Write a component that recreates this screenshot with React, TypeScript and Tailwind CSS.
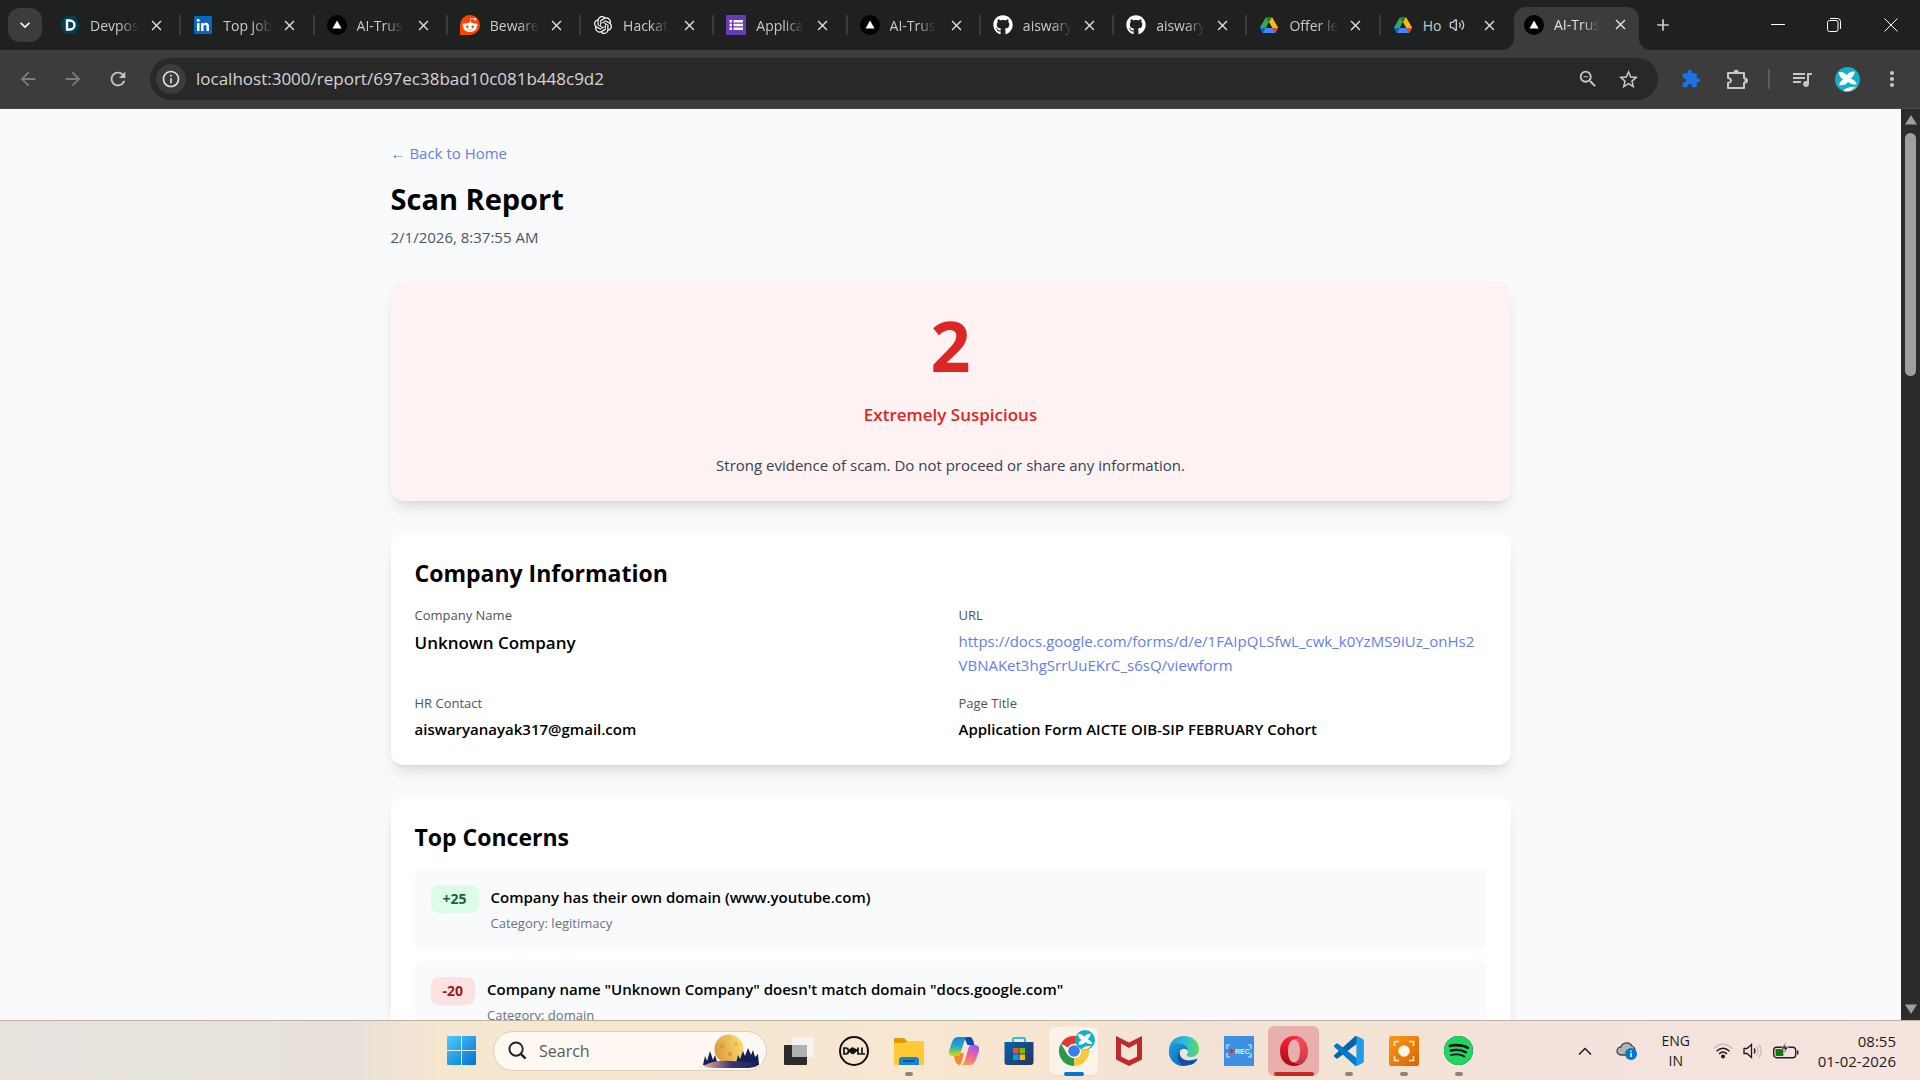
import { ReactNode } from "react";
import { Volume2 } from "lucide-react";
import { FaGithub, FaRedditAlien } from "react-icons/fa";
import { SiOpenai, SiSpotify } from "react-icons/si";
import {
    MdAdd,
    MdArrowBack,
    MdArrowForward,
    MdClose,
    MdExtension,
    MdInfoOutline,
    MdKeyboardArrowDown,
    MdMoreVert,
    MdQueueMusic,
    MdRefresh,
    MdStarBorder,
    MdZoomOut,
} from "react-icons/md";

const concerns = [
    { score: 25, title: "Company has their own domain (www.youtube.com)", category: "legitimacy" },
    { score: -20, title: 'Company name "Unknown Company" doesn\'t match domain "docs.google.com"', category: "domain" },
];

const DevpostIcon = () => (
    <svg viewBox="0 0 20 20" className="size-5">
        <path d="M5 1h10l5 9-5 9H5l-5-9z" fill="#003e54" />
        <path d="M7 5.5h3a4.5 4.5 0 0 1 0 9H7z" fill="none" stroke="#fff" strokeWidth="2.4" />
    </svg>
);

const LinkedInIcon = () => (
    <svg viewBox="0 0 18 18" className="size-[18px]">
        <rect width="18" height="18" rx="1" fill="#0a66c2" />
        <path d="M3 7h2.5v8H3zM7 7h2.4v1.1C9.9 7.3 10.7 6.8 11.8 6.8c2.5 0 3.2 1.6 3.2 3.9V15h-2.5v-4c0-1.1-.2-2-1.4-2-1.2 0-1.6.9-1.6 2v4H7z" fill="#fff" />
        <circle cx="4.2" cy="4.3" r="1.5" fill="#fff" />
    </svg>
);

const VercelIcon = () => (
    <svg viewBox="0 0 20 20" className="size-5 shrink-0">
        <circle cx="10" cy="10" r="10" fill="#000" />
        <path d="M10 5.5l4.5 8h-9z" fill="#fff" />
    </svg>
);

const RedditIcon = () => (
    <span className="flex size-5 items-center justify-center rounded-full rounded-bl-sm bg-[#ff4500]">
        <FaRedditAlien className="size-4 text-white" />
    </span>
);

const FormsIcon = () => (
    <svg viewBox="0 0 20 20" className="size-5">
        <rect width="20" height="20" rx="1" fill="#673ab7" />
        <path d="M7.500 5H17v2.500H7.500zM7.500 8.800H17v2.500H7.500zM7.500 12.600H17v2.500H7.500zM3.500 5H6v2.500H3.500zM3.500 8.800H6v2.500H3.500zM3.500 12.600H6v2.500H3.500z" fill="#fff" />
    </svg>
);

const DriveIcon = () => (
    <svg viewBox="0 0 87.3 78" className="size-[18px]">
        <path d="m6.6 66.85 3.85 6.65c.8 1.4 1.95 2.5 3.3 3.3l13.75-23.8H0c0 1.55.4 3.1 1.2 4.5z" fill="#0066da" />
        <path d="m43.65 25-13.75-23.8c-1.35.8-2.5 1.9-3.3 3.3L1.2 48.5A9.06 9.06 0 0 0 0 53h27.5z" fill="#34a853" />
        <path d="m73.55 76.8c1.35-.8 2.5-1.9 3.3-3.3l1.6-2.75 7.65-13.25c.8-1.4 1.2-2.95 1.2-4.5H59.8l5.85 11.5z" fill="#ea4335" />
        <path d="M43.65 25 57.4 1.2C56.05.4 54.5 0 52.9 0H34.4c-1.6 0-3.15.45-4.5 1.2z" fill="#188038" />
        <path d="M59.8 53H27.5L13.75 76.8c1.35.8 2.9 1.2 4.5 1.2h50.8c1.6 0 3.15-.45 4.5-1.2z" fill="#4285f4" />
        <path d="m73.4 26.5-12.7-22c-.8-1.4-1.95-2.5-3.3-3.3L43.65 25 59.8 53h27.45c0-1.55-.4-3.1-1.2-4.5z" fill="#fbbc04" />
    </svg>
);

// Profile picture: white bird on teal
const ProfileIcon = ({ className }: { className: string }) => (
    <svg viewBox="0 0 24 24" className={className}>
        <circle cx="12" cy="12" r="12" fill="#12b2c6" />
        <path d="M3.5 5c3-.5 6 .5 8 3 1.500-3 4.500-4 7.500-3.500-.5 3-2 5-4 6.500 2.500 1 5 2.500 6 5.500-3 .8-6 0-8.500-2-2 2.500-5 3.500-8.500 3 .5-3 2-4.500 4-5.500C5.500 10.500 4 8 3.500 5z" fill="#fff" />
        <path d="M8 23c2-3 6-4 12-4a12 12 0 0 1-12 4z" fill="#f4efe8" />
        <path d="M16 22l5-4-1 3z" fill="#e8823c" />
    </svg>
);

const tabs: { title: string; icon: ReactNode; audio?: boolean }[] = [
    { title: "Devpos", icon: <DevpostIcon /> },
    { title: "Top job", icon: <LinkedInIcon /> },
    { title: "AI-Trus", icon: <VercelIcon /> },
    { title: "Beware", icon: <RedditIcon /> },
    { title: "Hackat", icon: <SiOpenai className="size-[18px] text-white" /> },
    { title: "Applica", icon: <FormsIcon /> },
    { title: "AI-Trus", icon: <VercelIcon /> },
    { title: "aiswary", icon: <FaGithub className="size-5 text-white" /> },
    { title: "aiswary", icon: <FaGithub className="size-5 text-white" /> },
    { title: "Offer le", icon: <DriveIcon /> },
    { title: "Ho", icon: <DriveIcon />, audio: true },
];

const TabTitle = ({ title, audio }: { title: string; audio?: boolean }) => (
    <span className="flex w-[54px] shrink-0 items-center">
        <span className={audio ? "" : "whitespace-nowrap mask-r-from-60% mask-r-to-100%"}>{title}</span>
        {audio && <Volume2 className="ml-2 size-4 shrink-0" />}
    </span>
);

const TabStrip = () => (
    <div className="flex h-[50px] shrink-0 items-center bg-[#1f2120] text-[14px] text-[#c9caca]">
        <button aria-label="Search tabs" className="ml-2 flex h-[34px] w-[34px] shrink-0 items-center justify-center rounded-xl bg-[#3c3c3c]">
            <MdKeyboardArrowDown className="size-5 text-white" />
        </button>
        <div className="ml-[6px] flex w-[1466px]">
            {tabs.map((tab, i) => (
                <div key={i} className="flex h-5 flex-1 items-center pl-3">
                    <span className="mr-2.5 flex w-5 shrink-0 justify-center">{tab.icon}</span>
                    <TabTitle title={tab.title} audio={tab.audio} />
                    <button aria-label="Close tab" className="ml-1"><MdClose className="size-[17px] text-[#dcdcdc]" /></button>
                    {i < tabs.length - 1 && <span className="ml-auto h-5 w-0.5 bg-[#3c3c3c]" />}
                </div>
            ))}
        </div>
        <div className="relative flex h-[43px] w-[125px] items-center self-end rounded-t-xl bg-[#3c3c3c] pb-2 pl-2.5 text-[#e3e3e3]">
            <svg viewBox="0 0 12 12" className="absolute bottom-0 -left-3 size-3"><path d="M12 0v12H0A12 12 0 0 0 12 0z" fill="#3c3c3c" /></svg>
            <svg viewBox="0 0 12 12" className="absolute -right-3 bottom-0 size-3"><path d="M0 0v12h12A12 12 0 0 1 0 0z" fill="#3c3c3c" /></svg>
            <span className="mr-2.5"><VercelIcon /></span>
            <TabTitle title="AI-Trus" />
            <button aria-label="Close tab" className="ml-1"><MdClose className="size-[17px]" /></button>
        </div>
        <button aria-label="New tab" className="ml-[14px]"><MdAdd className="size-5" /></button>
        <div className="ml-auto flex items-center text-white">
            <button aria-label="Minimize" className="flex w-14 justify-center"><svg viewBox="0 0 14 14" className="size-[14px]"><path d="M0 6.5h14" stroke="currentColor" /></svg></button>
            <button aria-label="Restore" className="flex w-14 justify-center">
                <svg viewBox="0 0 14 14" className="size-[14px]" fill="none" stroke="currentColor">
                    <rect x=".5" y="2.5" width="10.5" height="11" rx="2" />
                    <path d="M3 .5h7.5a3 3 0 0 1 3 3V11" />
                </svg>
            </button>
            <button aria-label="Close" className="flex w-[58px] justify-center"><svg viewBox="0 0 14 14" className="size-[14px]"><path d="M.5.5l13 13M13.5.5l-13 13" stroke="currentColor" /></svg></button>
        </div>
    </div>
);

const Toolbar = () => (
    <div className="flex h-[59px] shrink-0 items-center border-b border-[#4a4a4a] bg-[#3c3c3c] text-[#c7c7c7]">
        <button aria-label="Back" className="ml-[17px] text-[#7d7d7d]"><MdArrowBack className="size-[22px]" /></button>
        <button aria-label="Forward" className="ml-[23px] text-[#7d7d7d]"><MdArrowForward className="size-[22px]" /></button>
        <button aria-label="Reload" className="ml-[23px]"><MdRefresh className="size-[22px]" /></button>
        <div className="ml-[21px] flex h-[42px] flex-1 items-center rounded-full bg-[#282828] pr-[18px] pl-[6px]">
            <button aria-label="Site information" className="flex size-[30px] shrink-0 items-center justify-center rounded-full bg-[#3c3c3c]">
                <MdInfoOutline className="size-5 text-[#e3e3e3]" />
            </button>
            <input aria-label="Address" readOnly value="localhost:3000/report/697ec38bad10c081b448c9d2" className="ml-[10px] min-w-0 flex-1 bg-transparent text-[17px] text-[#d5d5d5] outline-none" />
            <button aria-label="Zoom"><MdZoomOut className="size-[22px]" /></button>
            <button aria-label="Bookmark" className="ml-[18px]"><MdStarBorder className="size-[23px]" /></button>
        </div>
        <button aria-label="Extension" className="ml-[23px]"><MdExtension className="size-5 text-[#1a73e8]" /></button>
        <button aria-label="Extensions" className="ml-[25px]">
            <svg viewBox="0 0 22 22" className="size-[22px]">
                <path d="M2 5h16v5q3 .5 3 2.500t-3 2.500v5H2v-5q3-.5 3-2.500T2 10z" fill="none" stroke="currentColor" strokeWidth="2" strokeLinejoin="round" />
                <path d="M7.500 4.500a2.700 2.700 0 0 1 5.400 0zM18.500 10a2.600 2.600 0 0 1 0 5z" fill="currentColor" />
            </svg>
        </button>
        <span className="ml-[20px] h-5 w-0.5 bg-[#5c5c5c]" />
        <button aria-label="Media" className="ml-[20px]"><MdQueueMusic className="size-6" /></button>
        <button aria-label="Profile" className="ml-[21px]"><ProfileIcon className="size-[25px]" /></button>
        <button aria-label="Menu" className="mr-[16px] ml-[20px]"><MdMoreVert className="size-6" /></button>
    </div>
);

const Field = ({ label, children }: { label: string; children: ReactNode }) => (
    <div>
        <dt className="text-[13px] leading-5 text-gray-600">{label}</dt>
        <dd className="mt-1">{children}</dd>
    </div>
);

const Report = () => (
    <main className="min-w-0 flex-1 overflow-hidden bg-[#f9fafb] text-[15px] leading-6 text-black">
        <div className="mx-auto max-w-[1152px] px-4 py-8">
            <a href="#home" className="block text-[#667eea]">← Back to Home</a>
            <h1 className="mt-4 text-[29px] leading-9 font-bold">Scan Report</h1>
            <p className="mt-2 text-gray-600">2/1/2026, 8:37:55 AM</p>

            <section className="mt-8 rounded-xl bg-red-50 p-6 text-center shadow-lg">
                <div className="text-[70px] leading-[80px] font-bold text-[#dc2626]">2</div>
                <div className="mt-4 text-[17px] leading-7 font-semibold text-[#dc2626]">Extremely Suspicious</div>
                <p className="mt-6 text-gray-700">Strong evidence of scam. Do not proceed or share any information.</p>
            </section>

            <section className="mt-8 rounded-xl bg-white p-6 shadow-lg">
                <h2 className="text-[23px] leading-8 font-bold">Company Information</h2>
                <dl className="mt-4 grid grid-cols-2 gap-4">
                    <Field label="Company Name"><span className="block text-[17px] leading-7 font-semibold">Unknown Company</span></Field>
                    <Field label="URL">
                        <a href="#form" className="block break-all text-[#667eea]">
                            https://docs.google.com/forms/d/e/1FAIpQLSfwL_cwk_k0YzMS9iUz_onHs2<br />
                            VBNAKet3hgSrrUuEKrC_s6sQ/viewform
                        </a>
                    </Field>
                    <Field label="HR Contact"><span className="block font-semibold">aiswaryanayak317@gmail.com</span></Field>
                    <Field label="Page Title"><span className="block font-semibold">Application Form AICTE OIB-SIP FEBRUARY Cohort</span></Field>
                </dl>
            </section>

            <section className="mt-8 rounded-xl bg-white p-6 shadow-lg">
                <h2 className="text-[23px] leading-8 font-bold">Top Concerns</h2>
                <div className="mt-4 flex flex-col gap-3">
                    {concerns.map((concern) => <ConcernRow key={concern.title} {...concern} />)}
                </div>
            </section>
        </div>
    </main>
);

const ConcernRow = ({ score, title, category }: { score: number; title: string; category: string }) => (
    <div className="flex items-start gap-3 rounded-lg bg-[#f9fafb] p-4">
        <span className={score > 0 ? "rounded-lg bg-[#dcfce7] px-3 py-1 text-[14px] leading-5 font-bold text-[#166534]" : "rounded-lg bg-[#fee2e2] px-3 py-1 text-[14px] leading-5 font-bold text-[#991b1b]"}>
            {score > 0 ? "+" + score : score}
        </span>
        <div>
            <p className="font-semibold">{title}</p>
            <p className="mt-1 text-[13px] leading-5 text-gray-500">Category: {category}</p>
        </div>
    </div>
);

const Scrollbar = () => (
    <div className="flex w-[19px] shrink-0 flex-col items-center justify-between bg-[#2c2c2c] py-1.5">
        <svg viewBox="0 0 12 10" className="h-2.5 w-3"><path d="M6 0l6 9.5H0z" fill="#9f9f9f" /></svg>
        <div className="mt-2 mb-auto h-[243px] w-[11px] rounded-full bg-[#9f9f9f]" />
        <svg viewBox="0 0 12 10" className="h-2.5 w-3"><path d="M6 10l6-9.5H0z" fill="#9f9f9f" /></svg>
    </div>
);

const apps: { name: string; icon: ReactNode; state?: "open" | "active" | "alert" }[] = [
    {
        name: "Task view",
        icon: (
            <svg viewBox="0 0 30 30" className="size-[30px]">
                <rect y="9" width="23" height="20" rx="1" fill="#2b2b2b" />
                <rect x="8" y="1" width="22" height="20" rx="1" fill="#f4f4f4" />
                <path d="M8 9h15v12H8z" fill="#b0b0b0" />
            </svg>
        ),
    },
    {
        name: "Dell",
        icon: (
            <svg viewBox="0 0 30 30" className="size-[30px]">
                <circle cx="15" cy="15" r="14" fill="none" stroke="#111" strokeWidth="2" />
                <g fill="none" stroke="#111" strokeWidth="1.7">
                    <path d="M5 12v6h1.500q3 0 3-3t-3-3zM9.500 15l4-3 1.500 1-3.500 2.800 1 .8 4-3 1.300.8-3.800 3-3-1.600M19 11.500V18h3M23 11.500V18h3" />
                </g>
            </svg>
        ),
    },
    {
        name: "File Explorer",
        state: "open",
        icon: (
            <svg viewBox="0 0 30 30" className="size-[30px]">
                <path d="M0 3q0-1 1-1h9l3 3v4H0z" fill="#dd9b06" />
                <path d="M0 7h11l3-2h15q1 0 1 1v23H0z" fill="#ffca33" />
                <path d="M5 29v-5q0-3 3-3h14q3 0 3 3v5z" fill="#1585d6" />
                <path d="M9 25h12" stroke="#0a4a80" strokeWidth="1.5" />
            </svg>
        ),
    },
    {
        name: "Copilot",
        icon: (
            <svg viewBox="0 0 30 30" className="size-[30px]">
                <defs>
                    <linearGradient id="cop-a" x1="0" y1="0" x2="0" y2="1"><stop stopColor="#1683e8" /><stop offset=".5" stopColor="#2aa8c8" /><stop offset=".8" stopColor="#8fcf47" /><stop offset="1" stopColor="#f5c518" /></linearGradient>
                    <linearGradient id="cop-b" x1="0.6" y1="0" x2=".3" y2="1"><stop stopColor="#a259f0" /><stop offset=".5" stopColor="#f0609c" /><stop offset="1" stopColor="#ff9a4d" /></linearGradient>
                </defs>
                <path d="M15 1h6q2 0 3 3l1.500 5h-7z" fill="#1347b8" />
                <path d="M9 1h9q-2 1-3 5l-3 10q-1 4-4 4H4q-5 0-4-5l3-9q2-5 6-5z" fill="url(#cop-a)" />
                <path d="M22 9h4q5 0 4 6l-3 8q-2 6-6 6h-9q3-1 4-5l3-10q1-5 3-5z" fill="url(#cop-b)" />
                <path d="M8 20q3 0 4-4l-1 1h4l-2 7q-1 5-3 5-3-1-4-5l-1-4z" fill="#f7872f" />
            </svg>
        ),
    },
    {
        name: "Microsoft Store",
        icon: (
            <svg viewBox="0 0 30 30" className="size-[30px]">
                <defs><linearGradient id="store" x1="0" y1="0" x2="1" y2="1"><stop stopColor="#0b62ad" /><stop offset="1" stopColor="#26335c" /></linearGradient></defs>
                <path d="M9 7V2.500Q9 2 10 2h10q1 0 1 .5V7" fill="none" stroke="#36b9f0" strokeWidth="2" />
                <path d="M.5 6h29v20q0 3-3 3h-23q-3 0-3-3z" fill="url(#store)" />
                <path d="M9 12h5.500v5.500H9z" fill="#f25022" /><path d="M15.500 12H21v5.500h-5.500z" fill="#7fba00" />
                <path d="M9 18.500h5.500V24H9z" fill="#00a4ef" /><path d="M15.500 18.500H21V24h-5.500z" fill="#ffb900" />
            </svg>
        ),
    },
    {
        name: "Google Chrome",
        state: "active",
        icon: (
            <span className="relative">
                <svg viewBox="0 0 30 30" className="size-[30px]">
                    <path d="M15 15L2 7.500A15 15 0 0 1 28 7.500H15z" fill="#dd3b2e" />
                    <path d="M15 7.500h13A15 15 0 0 1 15 30l6.500-11.200z" fill="#fcc934" />
                    <path d="M2 7.500L8.500 18.800 15 22.500 15 30A15 15 0 0 1 2 7.500z" fill="#2a9a49" />
                    <path d="M15 30l6.500-11.200L15 21z" fill="#fcc934" />
                    <circle cx="15" cy="15" r="7.2" fill="#fff" />
                    <circle cx="15" cy="15" r="5.8" fill="#3a7ded" />
                </svg>
                <ProfileIcon className="absolute -top-1.5 -right-1.5 size-5" />
            </span>
        ),
    },
    {
        name: "McAfee",
        icon: (
            <svg viewBox="0 0 30 30" className="size-[30px]">
                <path d="M2 0l13 6.500L28 0v23.500L15 30 2 23.500zM7 7.500v13l8 4 8-4v-13l-8 4.500z" fill="#c02a2c" fillRule="evenodd" />
            </svg>
        ),
    },
    {
        name: "Microsoft Edge",
        icon: (
            <svg viewBox="0 0 30 30" className="size-[30px]">
                <defs>
                    <linearGradient id="edge-a"><stop stopColor="#2298dc" /><stop offset=".6" stopColor="#35c1cf" /><stop offset="1" stopColor="#62dc4e" /></linearGradient>
                    <linearGradient id="edge-b" x1="0" y1="0" x2="1" y2="1"><stop stopColor="#1b9de2" /><stop offset="1" stopColor="#0a5fb4" /></linearGradient>
                </defs>
                <path d="M0 13C1 5 7 0 15 0c9 0 15 6 15 13 0 5-4 8-8 8-3 0-5-1-4-3 3-3 0-8-6-8C6 10 1 13 0 13z" fill="url(#edge-a)" />
                <path d="M0 14C1 10 6 7 12 8c4 .5 7 3 7 7-2-3-6-3-8 0-3 6 2 13 10 13-2 1-4 2-6 2C6 30-1 23 0 14z" fill="url(#edge-b)" />
                <path d="M11 15c-2 7 6 12 16 8 1-.5 1.500 0 1 1-3 5-9 6-14 5-6-3-7-10-3-14z" fill="#10509a" />
            </svg>
        ),
    },
    {
        name: "Screen recorder",
        icon: (
            <svg viewBox="0 0 30 30" className="size-[30px]">
                <rect width="30" height="30" fill="#3d8fe0" />
                <path d="M6 9H3v4M3 17v4h3M24 9h3v4M27 17v4h-3" fill="none" stroke="#d6e7fa" strokeWidth="1.2" />
                <circle cx="7.5" cy="15" r="2.2" fill="#e0302b" />
                <text x="11" y="17.500" fontSize="7" fontWeight="700" fill="#e5effb" fontFamily="Liberation Sans">REC</text>
            </svg>
        ),
    },
    {
        name: "Opera",
        state: "alert",
        icon: (
            <svg viewBox="0 0 30 30" className="size-[30px]">
                <defs><linearGradient id="opera" x1="0" y1="0" x2="0" y2="1"><stop stopColor="#ff2034" /><stop offset="1" stopColor="#b00718" /></linearGradient></defs>
                <path d="M15 0C7 0 1 6 1 15s6 15 14 15 14-6 14-15S23 0 15 0zm0 3.500c4 0 6 5 6 11.500s-2 11.500-6 11.500S9 21.500 9 15s2-11.500 6-11.500z" fill="url(#opera)" fillRule="evenodd" />
                <path d="M15 3.500q3-2.500 7-1.500 7 5 7 13t-7 13q-4 1-7-1.500c4 0 6-5 6-11.500S19 3.500 15 3.500z" fill="#fff" fillOpacity=".2" />
            </svg>
        ),
    },
    {
        name: "Visual Studio Code",
        state: "open",
        icon: (
            <svg viewBox="0 0 100 100" className="size-[30px]">
                <path d="M96 11L75.500 1a6 6 0 0 0-7 1.200L1.300 63.500a4 4 0 0 0 0 6l5.500 5a4 4 0 0 0 5.300.2L93 13.300c2.700-2 6.600-.1 6.600 3.300v-.2c0-2.400-1.400-4.500-3.600-5.400z" fill="#0065a9" />
                <path d="M96 89L75.500 99a6 6 0 0 1-7-1.200L1.300 36.500a4 4 0 0 1 0-6l5.500-5a4 4 0 0 1 5.300-.2L93 86.700c2.700 2 6.600.1 6.600-3.300v.2c0 2.400-1.400 4.500-3.600 5.400z" fill="#007acc" />
                <path d="M75.500 99a6 6 0 0 1-7-1.200c2.200 2.200 6.200.6 6.200-2.600V4.800c0-3.200-4-4.800-6.200-2.600a6 6 0 0 1 7-1.200L96 11c2.200 1 3.500 3.200 3.500 5.600v66.800c0 2.400-1.400 4.600-3.500 5.600z" fill="#1f9cf0" />
            </svg>
        ),
    },
    {
        name: "Snip",
        state: "open",
        icon: (
            <svg viewBox="0 0 30 30" className="size-[30px]">
                <defs><linearGradient id="snip" x1="0" y1="0" x2="1" y2="1"><stop stopColor="#fb9a13" /><stop offset="1" stopColor="#d96300" /></linearGradient></defs>
                <rect width="30" height="30" rx="2" fill="url(#snip)" />
                <path d="M10 5.500H5.500V10M20 5.500h4.500V10M10 24.500H5.500V20M20 24.500h4.500V20" fill="none" stroke="#fdebd0" strokeWidth="1.5" />
                <circle cx="15" cy="15" r="5.7" fill="#fff5e8" />
            </svg>
        ),
    },
    { name: "Spotify", state: "open", icon: <span className="rounded-full bg-[#111]"><SiSpotify className="size-[29px] text-[#1ed760]" /></span> },
];

const TaskbarApp = ({ name, icon, state }: { name: string; icon: ReactNode; state?: "open" | "active" | "alert" }) => (
    <button aria-label={name} className="relative flex h-[50px] w-[55px] items-center justify-center">
        {state === "active" && <span className="absolute inset-x-[3px] inset-y-px rounded-md bg-[#fbf2ea] shadow-xs" />}
        {state === "alert" && <span className="absolute inset-x-[2px] inset-y-0 rounded-md bg-[#e8b0ac]" />}
        <span className="relative flex">{icon}</span>
        {state === "open" && <span className="absolute bottom-0 h-1 w-2 rounded-full bg-[#8d857c]" />}
        {state === "active" && <span className="absolute bottom-0 h-1 w-5 rounded-full bg-[#0078d4]" />}
        {state === "alert" && <span className="absolute bottom-0 h-1 w-10 rounded-full bg-[#c42b1c]" />}
    </button>
);

const MoonArt = () => (
    <svg viewBox="0 0 58 34" className="h-[34px] w-[58px]">
        <defs>
            <linearGradient id="moon" x1="0" y1=".6" x2="1" y2=".3"><stop stopColor="#d99a3d" /><stop offset="1" stopColor="#ffdd6e" /></linearGradient>
            <linearGradient id="lake"><stop stopColor="#f5a99a" /><stop offset=".5" stopColor="#3a3a70" /><stop offset="1" stopColor="#17205c" /></linearGradient>
        </defs>
        <circle cx="27" cy="15" r="14.5" fill="url(#moon)" />
        <circle cx="20" cy="12" r="2.5" fill="#dd9a45" /><circle cx="34" cy="10" r="2" fill="#eab44f" /><circle cx="28" cy="20" r="2" fill="#e88b4a" /><circle cx="27" cy="4" r="1.5" fill="#eab44f" />
        <path d="M1 31l2-9 2 5 3-10 3 9 2-5 3 10zM34 29l2-8 2 4 3-8 2 5 3-8 3 7 2-5 2 7 3-3 1 11z" fill="#141f55" />
        <path d="M1 32q10-6 28-5t28 2q0 4-10 5H20Q4 34 1 32z" fill="url(#lake)" />
    </svg>
);

const Taskbar = () => (
    <footer className="grid h-[60px] shrink-0 grid-cols-[1fr_auto_1fr] items-center border-t border-[#bdb1a6] bg-[linear-gradient(90deg,#e8e2dd_0%,#e7e4dd_10%,#e8dfda_18%,#f5e7cf_23%,#f6e7d2_40%,#f9e6d0_52%,#f1e2d6_63%,#f3e4d3_70%,#f4e2dc_80%,#f5e3dd_100%)] text-[#1b1b1b]">
        <div />
        <div className="flex items-center">
            <button aria-label="Start" className="flex w-[55px] justify-center">
                <svg viewBox="0 0 29 29" className="size-[29px]">
                    <defs><linearGradient id="win" x1="0" y1="0" x2="1" y2="1"><stop stopColor="#4fcbfb" /><stop offset="1" stopColor="#0072d0" /></linearGradient></defs>
                    <path d="M0 1q0-1 1-1h13v14H0zM15 0h13q1 0 1 1v13H15zM0 15h14v14H1q-1 0-1-1zM15 15h14v13q0 1-1 1H15z" fill="url(#win)" />
                </svg>
            </button>
            <label className="mx-1 flex h-10 w-[274px] items-center rounded-full border border-[#dccfbd] bg-[#fdf8f1] pr-1.5 pl-3.5">
                <svg viewBox="0 0 20 20" className="size-[19px] shrink-0" fill="none" stroke="#222" strokeWidth="2"><circle cx="8.5" cy="8.5" r="7" /><path d="M13.500 13.500l5 5" strokeWidth="2.6" /></svg>
                <input placeholder="Search" aria-label="Search" className="ml-3 min-w-0 flex-1 bg-transparent text-base outline-none placeholder:text-[#5e5b57]" />
                <MoonArt />
            </label>
            {apps.map((app) => <TaskbarApp key={app.name} {...app} />)}
        </div>
        <div className="flex items-center justify-end pr-6 text-[14px] leading-5">
            <button aria-label="Show hidden icons"><svg viewBox="0 0 14 8" className="h-2 w-3.5" fill="none" stroke="currentColor" strokeWidth="1.5"><path d="M1 7.500l6-6 6 6" /></svg></button>
            <svg viewBox="0 0 22 20" className="ml-6 h-5 w-[22px]">
                <path d="M5 14a4 4 0 0 1 0-8A6 6 0 0 1 16 5q3 1 3 5l-6 4z" fill="#b5b5b5" stroke="#444" strokeWidth="1.3" />
                <circle cx="15" cy="13" r="6" fill="#0078d4" /><path d="M15 12v4M15 9.500V11" stroke="#fff" strokeWidth="1.5" />
            </svg>
            <div className="ml-[22px] w-[32px] text-center">ENG<br />IN</div>
            <svg viewBox="0 0 20 16" className="ml-[21px] h-4 w-5" fill="none" stroke="currentColor" strokeWidth="1.4">
                <path d="M.8 5.500Q10-3 19.200 5.500" stroke="#c9bab4" /><path d="M3.500 8.300q6.500-6 13 0M6 11q4-3.800 8 0" /><circle cx="10" cy="13.5" r="1.3" fill="currentColor" />
            </svg>
            <svg viewBox="0 0 20 16" className="ml-[10px] h-4 w-5" fill="none" stroke="currentColor" strokeWidth="1.3">
                <path d="M1 5.500h3L8.500 1.500v13L4 10.500H1zM11 5.500q2 2.500 0 5" /><path d="M13.300 3.500q3.500 4.500 0 9M15.800 1.500q5 6.500 0 13" stroke="#c9bab4" />
            </svg>
            <svg viewBox="0 0 26 18" className="ml-[10px] h-[18px] w-[26px]">
                <rect x=".7" y="5.2" width="22" height="10.5" rx="3" fill="none" stroke="#222" strokeWidth="1.4" /><path d="M24.700 8.500v4" stroke="#222" strokeWidth="1.5" />
                <rect x="2.5" y="7" width="8" height="7" rx="1" fill="#107c10" /><path d="M13 0L8.500 7H12l-1.500 5L15.500 5H12z" fill="#222" stroke="#f5e3dd" strokeWidth=".6" />
            </svg>
            <time className="ml-[19px] text-right text-[15px]">08:55<br />01-02-2026</time>
        </div>
    </footer>
);

export default function App() {
    return (
        <div className="flex h-screen flex-col overflow-hidden font-['Open_Sans','Noto_Sans',sans-serif]">
            <header>
                <TabStrip />
                <Toolbar />
            </header>
            <div className="flex min-h-0 flex-1">
                <Report />
                <Scrollbar />
            </div>
            <Taskbar />
        </div>
    );
}
